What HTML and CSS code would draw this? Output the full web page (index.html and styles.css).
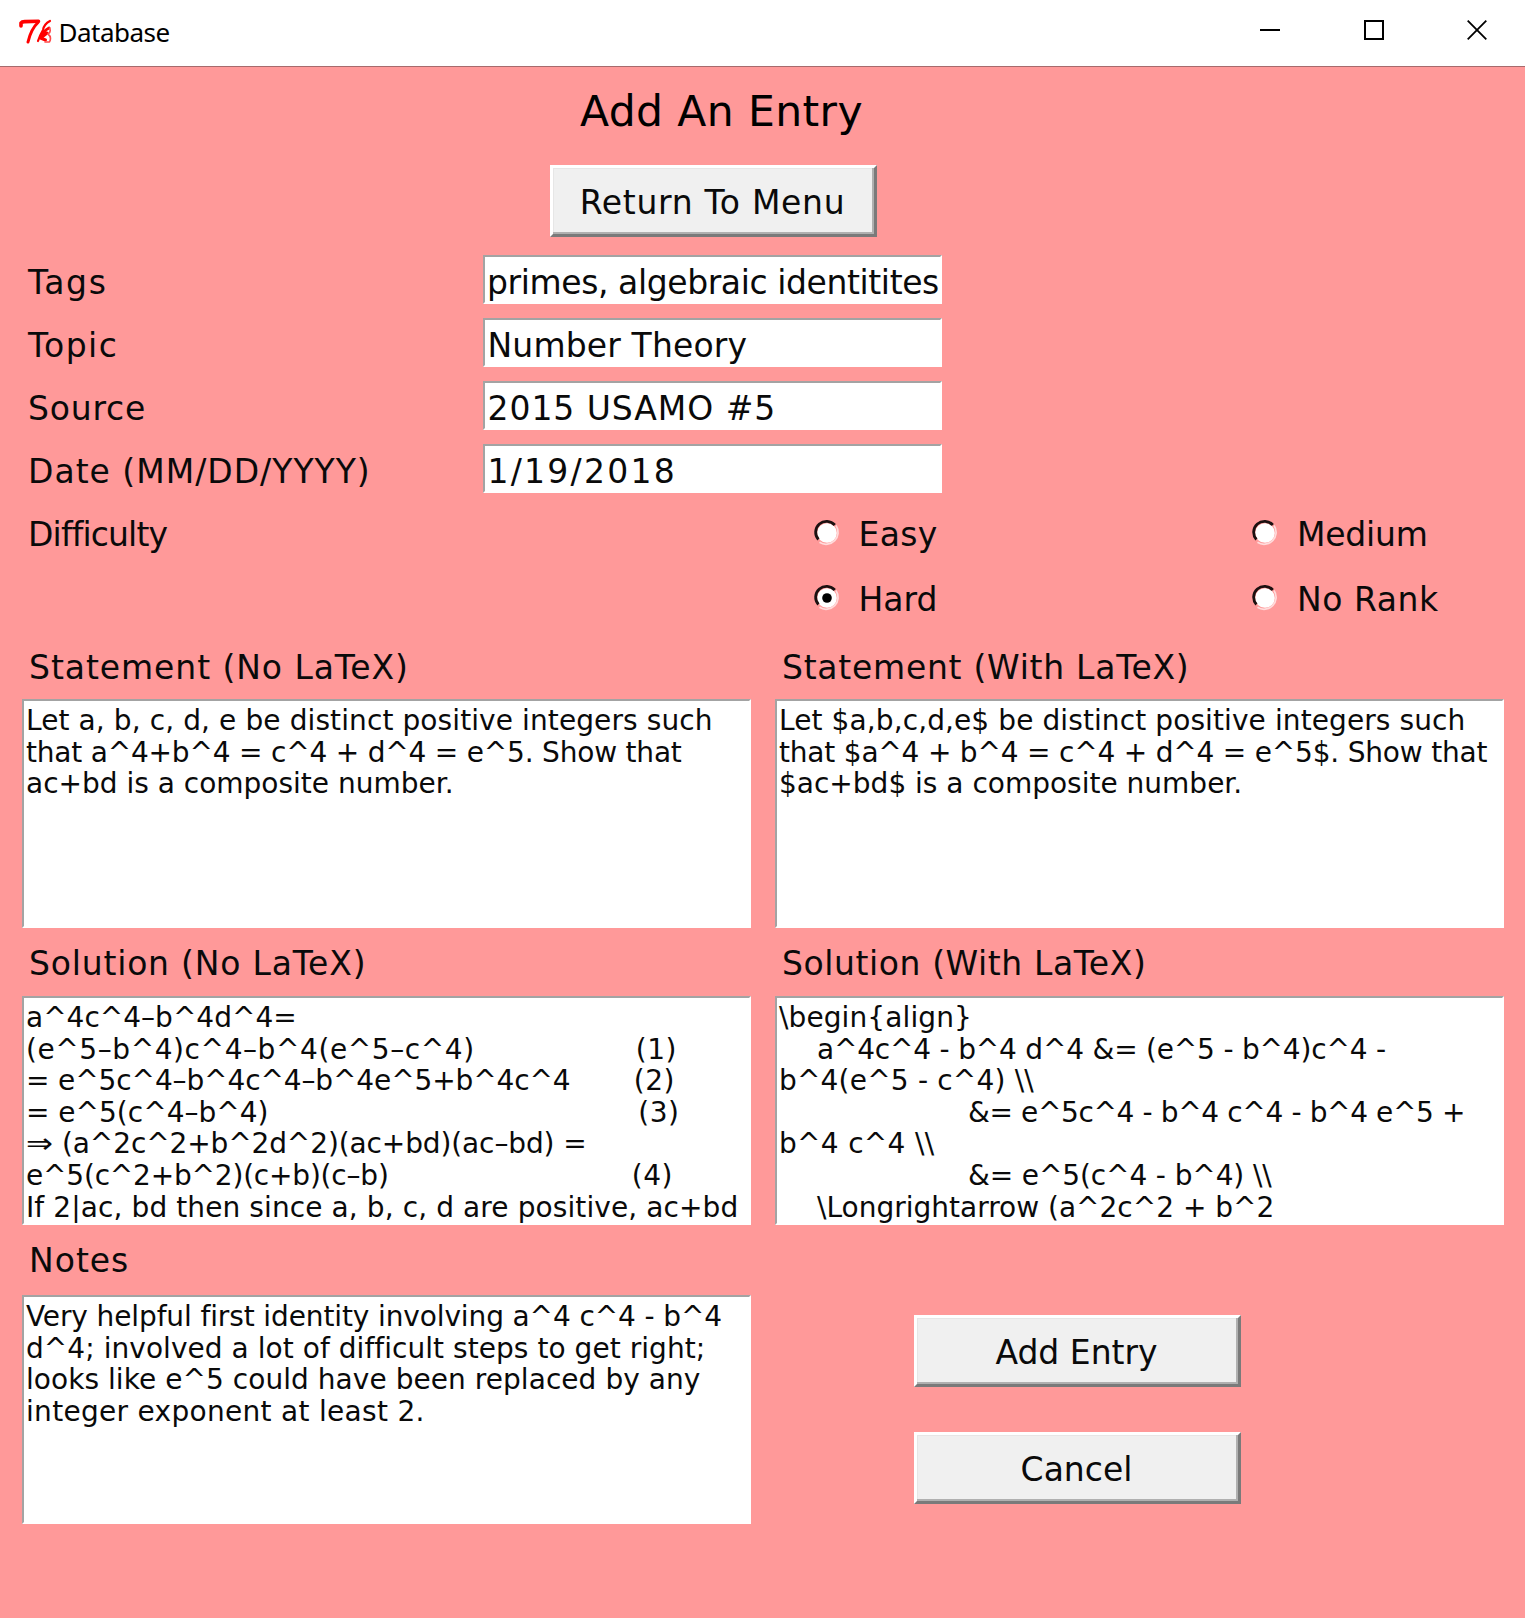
FILE: index.html
```
<!DOCTYPE html>
<html lang="en">
<head>
<meta charset="utf-8">
<title>Database</title>
<link rel="stylesheet" href="styles.css">
</head>
<body>
<header class="titlebar">
  <svg class="logo" width="34" height="28" viewBox="0 0 34 28" fill="none" stroke="#f00" stroke-linecap="round" stroke-linejoin="round">
    <path d="M3 8 V5 Q4 3.500 7 3.600 L20.500 3.300" stroke-width="3.600"/>
    <path d="M20 4.500 Q13 11 10 24" stroke-width="3"/>
    <path d="M32 3 Q26 6 25 12 Q22 17 20 23" stroke-width="2.200"/>
    <path d="M31 10 Q25 13 22.500 20 L27.500 22 M24 19 L29 15" stroke-width="3"/>
    <path d="M31.500 10 Q33.500 14 30 16 Q34 19 31.500 24 H27" stroke="#ff4a4a" stroke-width="1.600"/>
  </svg>
  <span class="caption">Database</span>
  <nav class="controls">
    <svg width="20" height="20" viewBox="0 0 20 20"><path d="M0 10h20" stroke="#000" stroke-width="2"/></svg>
    <svg width="20" height="20" viewBox="0 0 20 20"><path d="M1 1h18v18H1z" fill="none" stroke="#000" stroke-width="2"/></svg>
    <svg width="20" height="20" viewBox="0 0 20 20"><path d="M.7.700l18.600 18.600M19.300.700L.7 19.300" stroke="#000" stroke-width="1.800"/></svg>
  </nav>
</header>
<main>
  <section class="top">
    <h1>Add An Entry</h1>
    <button class="btn menu">Return To Menu</button>
  </section>

  <section class="fields">
    <div class="field"><label class="w16">Tags</label><div class="entry tags">primes, algebraic identitites</div></div>
    <div class="field"><label class="w14">Topic</label><div class="entry topic">Number Theory</div></div>
    <div class="field"><label class="w8">Source</label><div class="entry source">2015 USAMO #5</div></div>
    <div class="field"><label class="w10">Date (MM/DD/YYYY)</label><div class="entry date">1/19/2018</div></div>
  </section>

  <section class="difficulty">
    <label class="difficulty-label">Difficulty</label>
    <div class="radios">
      <div class="radio"><svg width="28" height="28" viewBox="0 0 28 28"><use href="#ring"/></svg><span class="w3">Easy</span></div>
      <div class="radio"><svg width="28" height="28" viewBox="0 0 28 28"><use href="#ring"/></svg><span class="n2">Medium</span></div>
      <div class="radio"><svg width="28" height="28" viewBox="0 0 28 28"><use href="#ring"/><circle cx="14" cy="14" r="4.800" fill="#000"/></svg><span>Hard</span></div>
      <div class="radio"><svg width="28" height="28" viewBox="0 0 28 28"><use href="#ring"/></svg><span class="w5">No Rank</span></div>
    </div>
  </section>

  <section class="pair statement">
    <label class="w9">Statement (No LaTeX)</label>
    <label class="w7">Statement (With LaTeX)</label>
    <div class="text">
      <p class="w1">Let a, b, c, d, e be distinct positive integers such</p>
      <p class="n2">that a^4+b^4 = c^4 + d^4 = e^5. Show that</p>
      <p>ac+bd is a composite number.</p>
    </div>
    <div class="text">
      <p class="w1">Let $a,b,c,d,e$ be distinct positive integers such</p>
      <p class="n2">that $a^4 + b^4 = c^4 + d^4 = e^5$. Show that</p>
      <p>$ac+bd$ is a composite number.</p>
    </div>
  </section>

  <section class="pair solution">
    <label class="w8">Solution (No LaTeX)</label>
    <label class="w6">Solution (With LaTeX)</label>
    <div class="text">
      <p>a^4c^4–b^4d^4=</p>
      <p class="w6">(e^5–b^4)c^4–b^4(e^5–c^4)<span class="ref r1">(1)</span></p>
      <p class="n1">= e^5c^4–b^4c^4–b^4e^5+b^4c^4<span class="ref r2">(2)</span></p>
      <p>= e^5(c^4–b^4)<span class="ref r3">(3)</span></p>
      <p class="n1"><span class="arrow">⇒</span>(a^2c^2+b^2d^2)(ac+bd)(ac–bd) =</p>
      <p class="n2">e^5(c^2+b^2)(c+b)(c–b)<span class="ref r4">(4)</span></p>
      <p class="w1">If 2|ac, bd then since a, b, c, d are positive, ac+bd</p>
    </div>
    <div class="text">
      <p class="w1">\begin{align}</p>
      <p class="n2 indent">a^4c^4 - b^4 d^4 &amp;= (e^5 - b^4)c^4 -</p>
      <p class="w2">b^4(e^5 - c^4) \\</p>
      <p class="n4 deep">&amp;= e^5c^4 - b^4 c^4 - b^4 e^5 +</p>
      <p class="w3">b^4 c^4 \\</p>
      <p class="n1 deep">&amp;= e^5(c^4 - b^4) \\</p>
      <p class="indent">\Longrightarrow (a^2c^2 + b^2</p>
    </div>
  </section>

  <section class="pair notes">
    <label class="w10">Notes</label>
    <span></span>
    <div class="text">
      <p class="n1">Very helpful first identity involving a^4 c^4 - b^4</p>
      <p class="w0">d^4; involved a lot of difficult steps to get right;</p>
      <p class="w0">looks like e^5 could have been replaced by any</p>
      <p class="w3">integer exponent at least 2.</p>
    </div>
    <div class="actions">
      <button class="btn">Add Entry</button>
      <button class="btn">Cancel</button>
    </div>
  </section>
</main>
<svg width="0" height="0" class="defs">
  <defs>
    <g id="ring">
      <circle cx="14" cy="14" r="9.800" fill="#fff"/>
      <path d="M5.400 20.500 A10.800 10.800 0 0 1 21.800 6" fill="none" stroke="#1c1010" stroke-width="2.800"/>
      <path d="M23 6.500 A12 12 0 0 1 6.500 23.300" fill="none" stroke="#ffdcdc" stroke-width="1.700"/>
    </g>
  </defs>
</svg>
</body>
</html>
```
FILE: styles.css
```
* { box-sizing: border-box; }
body {
  margin: 0;
  width: 1525px;
  height: 1618px;
  overflow: hidden;
  background: #ff9999;
  color: #0a0a0a;
  font: 33px/49px "DejaVu Sans", Verdana, sans-serif;
  font-variant-ligatures: none;
}
h1, p { margin: 0; font-weight: 400; }

.titlebar {
  display: flex;
  height: 67px;
  padding-left: 18px;
  background: #fff;
  border-bottom: 1px solid #a66a6c;
}
.logo { margin-top: 18px; }
.caption {
  margin-left: 6.500px;
  font: 26px/64px "Noto Sans", "Open Sans", sans-serif;
  letter-spacing: -.5px;
  color: #000;
}
.controls { display: flex; gap: 83.500px; margin: 20px 38px 0 auto; }
.controls svg { display: block; }

main { padding: 17px 21px 0 22px; }
.top {
  display: flex;
  flex-direction: column;
  align-items: center;
  width: 1383px;
}
h1 {
  height: 81px;
  padding-left: 16px;
  font-size: 42.500px;
  line-height: 56px;
  letter-spacing: .39px;
  color: #000;
}
.btn {
  width: 327px;
  height: 72px;
  padding: 3px 2px 0 0;
  font: inherit;
  color: inherit;
  background: #f0f0f0;
  border: 3px solid;
  border-color: #fff #7a7a7a #7a7a7a #fff;
  border-radius: 0;
  box-shadow: inset -2px -2px #b0b0b0, inset 1px 1px #e6e6e6;
}
.menu { letter-spacing: .7px; }

.fields { display: flex; flex-direction: column; gap: 14px; margin-top: 18px; }
.field { display: flex; padding-left: 6px; }
.field label { width: 455px; padding-top: 3px; height: 49px; }
.entry {
  width: 459px;
  height: 49px;
  padding: 3px 0 0 2.500px;
  line-height: 45px;
  white-space: nowrap;
  overflow: hidden;
  background: #fff;
  border: 2px solid;
  border-color: #a3a3a3 #fff #fff #a3a3a3;
}
.tags { padding-left: 2px; letter-spacing: -.4px; }
.topic { letter-spacing: .15px; }
.source { letter-spacing: .950px; }
.date { letter-spacing: 2.250px; }

.difficulty { display: flex; padding-left: 6px; height: 150px; }
.difficulty-label { width: 785px; padding-top: 17px; letter-spacing: -.85px; }
.radios {
  display: grid;
  grid-template-columns: 438.500px 260px;
  grid-template-rows: 65px 65px;
  padding-top: 14.500px;
}
.radio { display: flex; gap: 18px; line-height: 54px; white-space: nowrap; }
.radio svg { margin: 11px 0 0 7px; }

.pair { display: grid; grid-template-columns: 729px 729px; column-gap: 24px; }
.pair label { padding-left: 7px; }
.text {
  padding: 4px 0 0 2px;
  font-size: 28px;
  line-height: 31.600px;
  white-space: nowrap;
  overflow: hidden;
  background: #fff;
  border: 2px solid;
  border-color: #a3a3a3 #fff #fff #a3a3a3;
}
.text p { display: flex; }
.statement { grid-template-rows: 56px 229px; }
.solution { grid-template-rows: 68px 229px; }
.solution label { padding-top: 11px; }
.notes { grid-template-rows: 70px 229px; }
.notes label { padding-top: 11px; }
.indent { padding-left: 38px; }
.deep { padding-left: 189px; }
.arrow { width: 36px; transform: scaleX(1.15); transform-origin: left; }
.ref { margin-left: auto; letter-spacing: .5px; }
.r1 { margin-right: 72px; }
.r2 { margin-right: 74px; }
.r3 { margin-right: 69.500px; }
.r4 { margin-right: 76px; }

.actions {
  display: flex;
  flex-direction: column;
  gap: 45px;
  padding: 20px 0 0 139px;
}

/* Tracking steps */
.n4 { letter-spacing: -.37px; }
.n2 { letter-spacing: -.2px; }
.n1 { letter-spacing: -.12px; }
.w0 { letter-spacing: .05px; }
.w1 { letter-spacing: .1px; }
.w2 { letter-spacing: .19px; }
.w3 { letter-spacing: .3px; }
.w5 { letter-spacing: .55px; }
.w6 { letter-spacing: .58px; }
.w7 { letter-spacing: .73px; }
.w8 { letter-spacing: .8px; }
.w9 { letter-spacing: .93px; }
.w10 { letter-spacing: 1px; }
.w14 { letter-spacing: 1.450px; }
.w16 { letter-spacing: 1.600px; }
.defs { display: block; }
```
